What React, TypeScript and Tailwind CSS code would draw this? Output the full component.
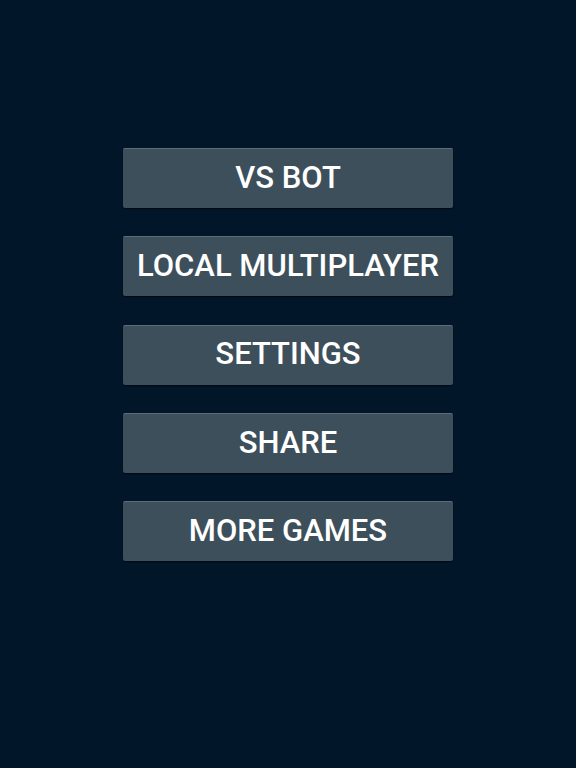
const items = ['VS BOT', 'LOCAL MULTIPLAYER', 'SETTINGS', 'SHARE', 'MORE GAMES'];

export default function App() {
  return (
    <div
      className="flex h-[768px] w-[576px] flex-col items-center bg-[#011629] pt-[148px]"
      style={{ fontFamily: 'Roboto, "Liberation Sans", sans-serif' }}
    >
      <div className="flex flex-col gap-[28.25px]">
        {items.map((label) => (
          <button
            key={label}
            className="flex h-[60px] w-[330px] items-center justify-center rounded-[2px] border-t border-t-[#5b6b77] bg-[#3d4f5b] pb-[1px] text-[31px] font-medium text-white shadow-[0_1px_1px_rgba(0,0,0,0.6)]"
          >
            {label}
          </button>
        ))}
      </div>
    </div>
  );
}
